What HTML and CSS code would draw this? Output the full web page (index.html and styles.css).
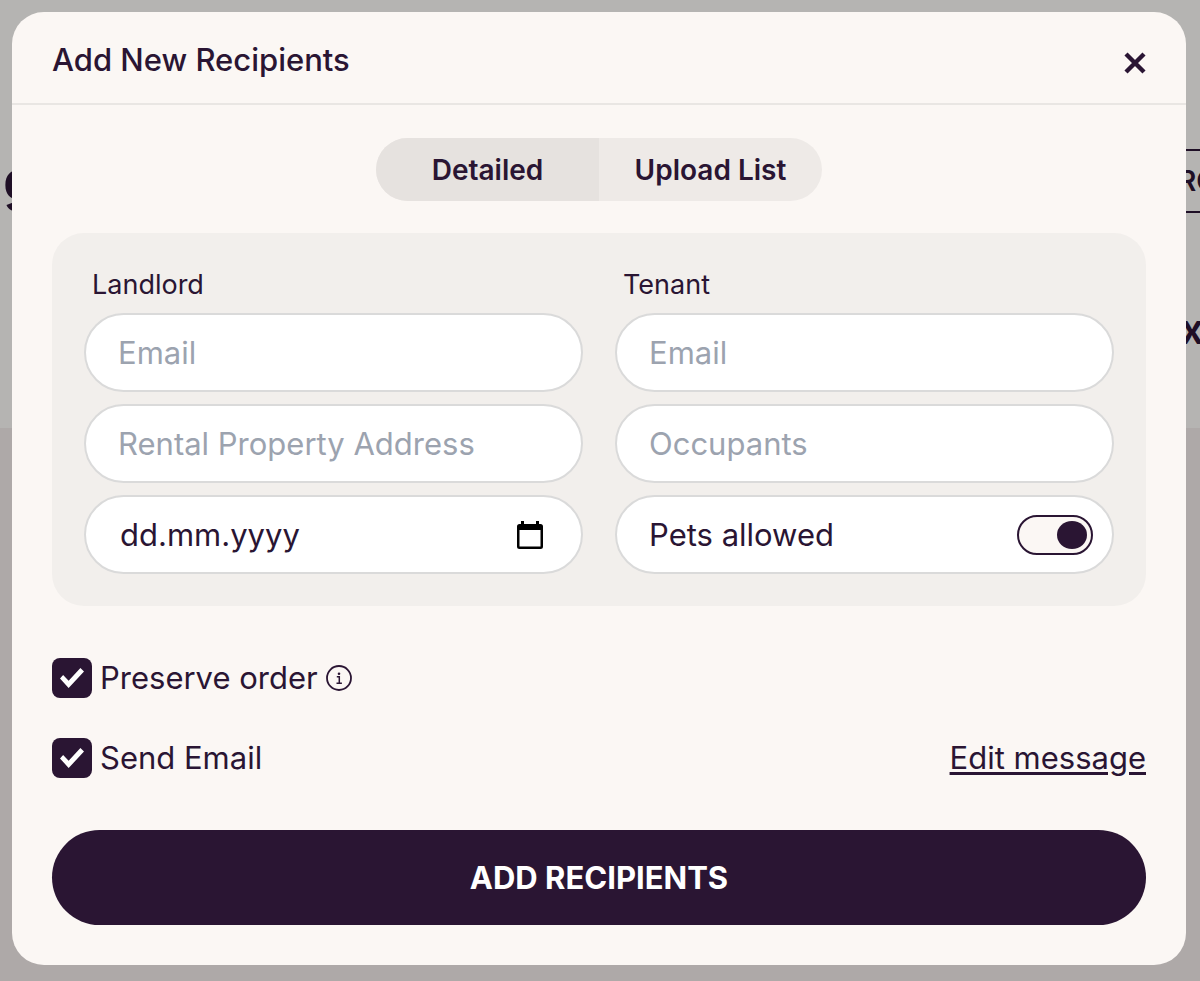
FILE: index.html
```html
<!DOCTYPE html>
<html lang="en">
<head>
  <meta charset="UTF-8">
  <meta name="viewport" content="width=device-width, initial-scale=1.0">
  <title>Add New Recipients</title>
  <link rel="stylesheet" href="styles.css">
</head>
<body>
  <!-- Page behind the dialog -->
  <div class="page" aria-hidden="true">
    <div class="page-top">
      <div class="page-bar">
        <span class="page-title">ng</span>
        <span class="page-button">RO</span>
      </div>
      <div class="page-row">x</div>
    </div>
  </div>

  <div class="overlay">
    <form class="modal" id="recipientsForm" role="dialog" aria-labelledby="modalTitle">
      <header class="modal-header">
        <h2 id="modalTitle">Add New Recipients</h2>
        <button type="button" class="close" aria-label="Close">
          <svg width="22" height="22" viewBox="0 0 22 22" fill="none" stroke="currentColor" stroke-width="4.400">
            <path d="M2 2L20 20M20 2L2 20"/>
          </svg>
        </button>
      </header>

      <div class="modal-body">
        <div class="tabs">
          <button type="button" class="tab active">Detailed</button>
          <button type="button" class="tab">Upload List</button>
        </div>

        <div class="panel">
          <div class="column">
            <label class="column-label" for="landlordEmail">Landlord</label>
            <input class="field" type="email" id="landlordEmail" name="landlordEmail" placeholder="Email">
            <input class="field" type="text" name="address" placeholder="Rental Property Address" aria-label="Rental Property Address">
            <div class="field date-field">
              <input type="text" name="date" placeholder="dd.mm.yyyy" aria-label="Date">
              <button type="button" class="calendar" aria-label="Open calendar">
                <svg width="26" height="28" viewBox="0 0 26 28">
                  <path fill="currentColor" fill-rule="evenodd" d="M4 0h3v3h12V0h3v3h1.500a2.500 2.500 0 0 1 2.500 2.500v20a2.500 2.500 0 0 1-2.500 2.500h-21a2.500 2.500 0 0 1-2.500-2.500v-20a2.500 2.500 0 0 1 2.500-2.500h1.500zM2.500 9v16.500h21V9z"/>
                </svg>
              </button>
            </div>
          </div>

          <div class="column">
            <label class="column-label" for="tenantEmail">Tenant</label>
            <input class="field" type="email" id="tenantEmail" name="tenantEmail" placeholder="Email">
            <input class="field" type="text" name="occupants" placeholder="Occupants" aria-label="Occupants">
            <div class="field toggle-field">
              <label for="pets">Pets allowed</label>
              <input class="toggle" type="checkbox" id="pets" name="pets" checked>
            </div>
          </div>
        </div>

        <div class="options">
          <div class="option">
            <input class="check" type="checkbox" id="preserveOrder" name="preserveOrder" checked>
            <label for="preserveOrder">Preserve order</label>
            <svg class="info" width="26" height="26" viewBox="0 0 26 26" fill="none" stroke="currentColor">
              <circle cx="13" cy="13" r="12" stroke-width="1.800"/>
              <circle cx="13" cy="8.800" r="1.300" fill="currentColor" stroke="none"/>
              <path d="M10.800 11.800h2.500v6.400M10.500 18.300h5.400" stroke-width="1.500"/>
            </svg>
          </div>
          <div class="option">
            <input class="check" type="checkbox" id="sendEmail" name="sendEmail" checked>
            <label for="sendEmail">Send Email</label>
            <a class="edit" href="#">Edit message</a>
          </div>
        </div>

        <button type="submit" class="submit">ADD RECIPIENTS</button>
      </div>
    </form>
  </div>

  <script>
    const tabs = document.querySelectorAll('.tab');

    // Switch the active tab
    tabs.forEach(function(tab) {
      tab.addEventListener('click', function() {
        tabs.forEach(t => t.classList.remove('active'));
        tab.classList.add('active');
      });
    });

    document.getElementById('recipientsForm').addEventListener('submit', function(event) {
      event.preventDefault();
    });
  </script>
</body>
</html>
```
FILE: styles.css
```css
* {
  box-sizing: border-box;
}
body {
  margin: 0;
  background: #aea9a8;
  color: #2a1533;
  font-family: Inter, "Liberation Sans", sans-serif;
  font-size: 31px;
  line-height: 40px;
}
button, input {
  font: inherit;
  color: inherit;
}
button {
  border: none;
  padding: 0;
  background: none;
  cursor: pointer;
}
svg {
  display: block;
}

/* Page behind the dialog */
.page {
  overflow: hidden;
  min-height: 100vh;
}
.page-top {
  background: #b5b4b2;
  padding: 149px 0 79px;
  color: #1f0f26;
}
.page-bar {
  display: flex;
  justify-content: space-between;
  align-items: center;
}
.page-title {
  margin-left: -30px;
  font-size: 54px;
  font-weight: 600;
}
.page-button {
  height: 64px;
  width: 80px;
  margin-right: -40px;
  padding: 0 16px;
  border: 2px solid;
  font-size: 28px;
  font-weight: 600;
  line-height: 60px;
}
.page-row {
  margin: 96px -4px 0 0;
  font-size: 42px;
  font-weight: 600;
  text-align: right;
}

/* Dialog */
.overlay {
  position: absolute;
  inset: 0;
  padding: 12px 14px 16px 12px;
}
.modal {
  background: #fbf7f4;
  border-radius: 32px;
}
.modal-header {
  display: flex;
  justify-content: space-between;
  align-items: center;
  padding: 28px 40px 23px;
  border-bottom: 2px solid #e9e6e3;
}
.modal-header h2 {
  margin: 0;
  font-size: 31px;
  font-weight: 500;
}
.close {
  padding-top: 6px;
}
.modal-body {
  display: flex;
  flex-direction: column;
  padding: 33px 40px 40px;
}

.tabs {
  display: grid;
  grid-template-columns: 1fr 1fr;
  align-self: center;
  width: 446px;
  border-radius: 32px;
  overflow: hidden;
  background: #eeeae7;
}
.tab {
  height: 63px;
  font-size: 28px;
  font-weight: 600;
}
.tab.active {
  background: #e6e2df;
}

/* Landlord and tenant fields */
.panel {
  display: grid;
  grid-template-columns: repeat(2, minmax(0, 1fr));
  gap: 32px;
  margin-top: 32px;
  padding: 32px;
  border-radius: 32px;
  background: #f2efec;
}
.column {
  display: flex;
  flex-direction: column;
  gap: 12px;
}
.column-label {
  margin-bottom: -4px;
  padding-left: 8px;
  font-size: 27px;
}
.field {
  width: 100%;
  height: 79px;
  padding: 0 32px;
  border: 2px solid #dadada;
  border-radius: 40px;
  background: #fff;
}
.field::placeholder {
  color: #9ca3af;
  opacity: 1;
}
.date-field, .toggle-field {
  display: flex;
  justify-content: space-between;
  align-items: center;
}
.date-field {
  padding-right: 38px;
}
.date-field input {
  flex: 1;
  min-width: 0;
  border: none;
  padding: 0 2px;
  background: none;
}
.date-field input::placeholder {
  color: #2a1533;
  opacity: 1;
}
.calendar {
  color: #000;
}
.toggle-field {
  padding-right: 19px;
}
.toggle {
  appearance: none;
  display: flex;
  align-items: center;
  width: 76px;
  height: 40px;
  margin: 0;
  padding: 0 4px;
  border: 2px solid #2a1533;
  border-radius: 20px;
  background: #fbf7f4;
}
.toggle::before {
  content: "";
  width: 30px;
  height: 28px;
  border-radius: 50%;
  background: #2a1533;
}
.toggle:checked {
  justify-content: flex-end;
}

/* Options */
.options {
  display: grid;
  gap: 40px;
  margin-top: 52px;
}
.option {
  display: flex;
  align-items: center;
}
.option label {
  margin-left: 8px;
}
.check {
  appearance: none;
  display: grid;
  place-items: center;
  width: 40px;
  height: 40px;
  margin: 0;
  border-radius: 8px;
  background: #2a1533;
}
.check:checked::before {
  content: "";
  width: 24px;
  height: 20px;
  background: #fff;
  clip-path: polygon(0 52%, 13% 35%, 36% 64%, 85% 0, 100% 18%, 36% 100%);
}
.info {
  margin-left: 8px;
}
.edit {
  margin-left: auto;
  color: inherit;
  text-decoration-thickness: 3px;
  text-underline-offset: 3px;
}

.submit {
  height: 95px;
  margin-top: 52px;
  border-radius: 48px;
  background: #2a1533;
  color: #fff;
  font-weight: 700;
}
```
